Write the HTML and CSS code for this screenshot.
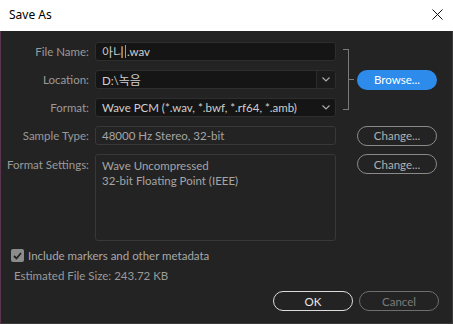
FILE: index.html
```html
<!DOCTYPE html>
<html lang="ko">
<head>
    <meta charset="UTF-8">
    <title>Save As</title>
    <link rel="stylesheet" href="styles.css">
</head>

<body>
    <div class="window">
        <div class="titlebar">
            <span class="title">Save As</span>
            <svg class="close" width="11" height="11" viewBox="0 0 11 11">
                <path d="M0.5 0.5 L10.5 10.5 M10.5 0.5 L0.5 10.5" stroke="#111" stroke-width="1"/>
            </svg>
        </div>

        <div class="body">
            <div class="form">
                <label class="label">File Name:</label>
                <div class="field input"><span class="ko">아니</span><span class="caret"></span>.wav</div>
                <div class="bracket">
                    <div class="bracket-box"></div>
                    <div class="bracket-tick"></div>
                </div>

                <label class="label row2">Location:</label>
                <div class="field input select split row2">
                    <span class="value">D:\<span class="ko">녹음</span></span>
                    <span class="arrow">
                        <svg width="8" height="5" viewBox="0 0 8 5"><path d="M0.5 0.5 L4 4 L7.5 0.5" fill="none" stroke="#aaa" stroke-width="1.2"/></svg>
                    </span>
                </div>
                <button class="btn btn-blue row2">Browse...</button>

                <label class="label row3">Format:</label>
                <div class="field input select row3">
                    <span class="value">Wave PCM (*.wav, *.bwf, *.rf64, *.amb)</span>
                    <span class="arrow">
                        <svg width="8" height="5" viewBox="0 0 8 5"><path d="M0.5 0.5 L4 4 L7.5 0.5" fill="none" stroke="#aaa" stroke-width="1.2"/></svg>
                    </span>
                </div>

                <label class="label row4">Sample Type:</label>
                <div class="field readonly row4">48000 Hz Stereo, 32-bit</div>
                <button class="btn btn-ghost row4">Change...</button>

                <label class="label top row5">Format Settings:</label>
                <div class="field readonly area row5">Wave Uncompressed<br>32-bit Floating Point (IEEE)</div>
                <button class="btn btn-ghost top row5">Change...</button>
            </div>

            <div class="check-row">
                <span class="checkbox">
                    <svg width="9" height="8" viewBox="0 0 9 8"><path d="M1 4 L3.5 6.5 L8 1" fill="none" stroke="#222" stroke-width="1.8"/></svg>
                </span>
                <span>Include markers and other metadata</span>
            </div>

            <div class="size">Estimated File Size: 243.72 KB</div>

            <div class="actions">
                <button class="btn btn-ok">OK</button>
                <button class="btn btn-cancel">Cancel</button>
            </div>
        </div>
    </div>
</body>

</html>
```

FILE: styles.css
```css
html,
body {
    margin: 0;
    padding: 0;
    background: #232323;
}

.window {
    width: 453px;
    height: 324px;
    box-sizing: border-box;
    border: 1px solid #3a3a3a;
    border-left-color: #5b3650;
    border-top: 0;
    background: #232323;
    font-family: Lato, "Noto Sans CJK KR", sans-serif;
    font-size: 11px;
    color: #9a9a9a;
    display: flex;
    flex-direction: column;
}

.titlebar {
    height: 29px;
    background: #fff;
    display: flex;
    align-items: center;
    justify-content: space-between;
    padding: 0 10px 2px 9px;
    margin: 0 -1px;
}

.title {
    font-family: "Noto Sans", "Noto Sans CJK KR", sans-serif;
    font-size: 12px;
    color: #000;
}

.body {
    flex: 1;
    padding-top: 11px;
    display: flex;
    flex-direction: column;
}

/* form grid */
.form {
    display: grid;
    grid-template-columns: 94px 241px 21px 80px;
    grid-template-rows: 19px 19px 19px 19px 87px;
    row-gap: 9px;
}

.label {
    grid-column: 1;
    text-align: right;
    padding-right: 6px;
    align-self: center;
    white-space: nowrap;
    font-size: 11.5px;
}

.label.top {
    align-self: start;
    padding-top: 4px;
}

.row2 { grid-row: 2; }
.row3 { grid-row: 3; }
.row4 { grid-row: 4; }
.row5 { grid-row: 5; }

.field {
    grid-column: 2;
    box-sizing: border-box;
    border: 1px solid #333;
    border-radius: 3px;
    padding: 0 6px;
    display: flex;
    align-items: center;
    white-space: nowrap;
    overflow: hidden;
    font-size: 11.5px;
}

.ko {
    font-family: "Noto Sans CJK KR", sans-serif;
    font-size: 12px;
}

.input {
    background: #151515;
    color: #cfcfcf;
    border-color: #2e2e2e;
}

.caret {
    display: inline-block;
    width: 1px;
    height: 13px;
    background: #7fa3c8;
    margin: 0 1px;
}

.select {
    padding-right: 0;
}

.select .value {
    flex: 1;
}

.arrow {
    width: 18px;
    align-self: stretch;
    display: flex;
    align-items: center;
    justify-content: center;
}

.split .arrow {
    border-left: 1px solid #2a2a2a;
    background: #1b1b1b;
}

.readonly {
    background: #232323;
    color: #a5a5a5;
    border-color: #383838;
}

.area {
    align-items: flex-start;
    flex-direction: column;
    padding-top: 3px;
    line-height: 15px;
}

.bracket {
    grid-column: 3;
    grid-row: 1 / 4;
    display: flex;
    align-items: center;
    padding: 7px 0 7px 7px;
}

.bracket-box {
    width: 5px;
    align-self: stretch;
    border: 1px solid #7a7a7a;
    border-left: 0;
}

.bracket-tick {
    width: 5px;
    height: 1px;
    background: #7a7a7a;
}

/* buttons */
.btn {
    font-family: Lato, sans-serif;
    font-size: 11.5px;
    box-sizing: border-box;
    height: 20px;
    border-radius: 10px;
    padding: 0;
    background: transparent;
    cursor: pointer;
}

.form .btn {
    grid-column: 4;
    align-self: center;
}

.form .btn.top {
    align-self: start;
}

.btn-blue {
    background: #2d8ceb;
    border: 0;
    color: #fff;
}

.btn-ghost {
    border: 1.5px solid #8a8a8a;
    color: #b0b0b0;
}

.check-row {
    display: flex;
    align-items: center;
    gap: 4px;
    margin: 8px 0 0 10px;
    color: #a8a8a8;
    font-size: 11.5px;
}

.checkbox {
    width: 13px;
    height: 13px;
    border-radius: 2px;
    background: #8c8c8c;
    display: flex;
    align-items: center;
    justify-content: center;
}

.size {
    margin: 7px 0 0 13px;
    color: #9a9a9a;
    font-size: 11.5px;
}

.actions {
    display: flex;
    gap: 6px;
    margin: 9px 0 0 272px;
}

.btn-ok {
    width: 80px;
    border: 1.5px solid #dcdcdc;
    color: #e8e8e8;
}

.btn-cancel {
    width: 80px;
    border: 1.5px solid #6e6e6e;
    color: #7c7c7c;
}
```
